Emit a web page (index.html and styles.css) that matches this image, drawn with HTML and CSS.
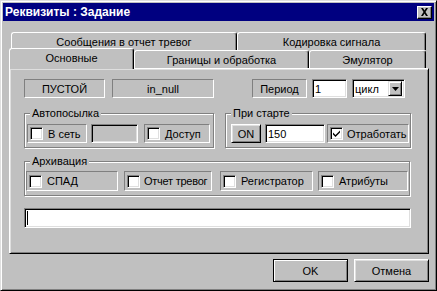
FILE: index.html
```html
<!DOCTYPE html>
<html lang="ru">
<head>
    <meta charset="UTF-8">
    <title>Реквизиты : Задание</title>
    <link rel="stylesheet" href="styles.css">
</head>
<body>
    <div class="window">
        <div class="titlebar">
            <span class="title">Реквизиты : Задание</span>
            <span class="close">
                <svg width="9" height="8" viewBox="0 0 9 8"><path d="M1 0h2l1.5 2.5L6 0h2L5.5 4 8 8H6L4.5 5.5 3 8H1l2.5-4z" fill="#000"/></svg>
            </span>
        </div>
        <div class="content">
            <div class="tab-row back">
                <div class="tab w-alarm">Сообщения в отчет тревог</div>
                <div class="tab w-code">Кодировка сигнала</div>
            </div>
            <div class="tab-row front">
                <div class="tab active w-main">Основные</div>
                <div class="tab w-limits">Границы и обработка</div>
                <div class="tab w-emul">Эмулятор</div>
            </div>
            <div class="panel">
                <div class="row top-row">
                    <div class="static w-type">ПУСТОЙ</div>
                    <div class="static w-name">in_null</div>
                    <div class="static w-period">Период</div>
                    <div class="edit w-num">1</div>
                    <div class="edit combo">
                        <span class="combo-text">цикл</span>
                        <span class="combo-btn">
                            <svg width="7" height="4" viewBox="0 0 7 4"><path d="M0 0h7L3.5 4z" fill="#000"/></svg>
                        </span>
                    </div>
                </div>

                <div class="row groups-row">
                    <div class="group g-auto">
                        <span class="group-label">Автопосылка</span>
                        <div class="group-row pad-auto">
                            <div class="check w-net"><span class="box"></span>В сеть</div>
                            <div class="edit disabled w-blank"></div>
                            <div class="check w-access"><span class="box"></span>Доступ</div>
                        </div>
                    </div>
                    <div class="group g-start">
                        <span class="group-label">При старте</span>
                        <div class="group-row pad-start">
                            <div class="button w-on">ON</div>
                            <div class="edit w-delay">150</div>
                            <div class="check w-run">
                                <span class="box">
                                    <svg width="7" height="7" viewBox="0 0 7 7"><path d="M0 2.5l2.5 2.5L7 0.5v2L2.5 7 0 4.5z" fill="#000"/></svg>
                                </span>Отработать
                            </div>
                        </div>
                    </div>
                </div>

                <div class="group g-archive">
                    <span class="group-label">Архивация</span>
                    <div class="group-row pad-archive">
                        <div class="check tall w-spad"><span class="box"></span>СПАД</div>
                        <div class="check tall w-report"><span class="box"></span>Отчет тревог</div>
                        <div class="check tall w-reg"><span class="box"></span>Регистратор</div>
                        <div class="check tall w-attr"><span class="box"></span>Атрибуты</div>
                    </div>
                </div>

                <div class="edit text-line"><span class="caret"></span></div>
            </div>
            <div class="buttons">
                <div class="button default">OK</div>
                <div class="button">Отмена</div>
            </div>
        </div>
    </div>
</body>
</html>
```

FILE: styles.css
```css
body {
    margin: 0;
    background: #c0c0c0;
    font-family: "Liberation Sans", Arial, sans-serif;
    font-size: 11px;
    color: #000;
}
.window {
    width: 437px;
    height: 291px;
    box-sizing: border-box;
    border: 1px solid;
    border-color: #dfdfdf #000 #000 #dfdfdf;
    box-shadow: inset 1px 1px #fff, inset -1px -1px #808080;
    padding: 2px;
    display: flex;
    flex-direction: column;
}
.titlebar {
    height: 18px;
    background: #000080;
    color: #fff;
    display: flex;
    align-items: center;
    justify-content: space-between;
    padding: 0 2px;
}
.title {
    font-weight: bold;
    font-size: 12px;
}
.close {
    width: 15px;
    height: 13px;
    box-sizing: border-box;
    background: #c0c0c0;
    border: 1px solid;
    border-color: #fff #000 #000 #fff;
    box-shadow: inset -1px -1px #808080;
    display: flex;
    align-items: center;
    justify-content: center;
}
.content {
    padding: 11px 0 0 6px;
}

/* tabs */
.tab-row {
    display: flex;
    height: 18px;
    align-items: flex-start;
}
.tab-row.back {
    padding-left: 2px;
}
.tab {
    box-sizing: border-box;
    height: 18px;
    border: 1px solid;
    border-bottom: 0;
    border-color: #fff #000 #000 #fff;
    border-radius: 3px 3px 0 0;
    box-shadow: inset -1px 0 #808080;
    display: flex;
    align-items: center;
    justify-content: center;
    background: #c0c0c0;
    white-space: nowrap;
}
.tab.active {
    height: 21px;
    margin-top: -2px;
    padding-bottom: 3px;
    position: relative;
    z-index: 1;
}
.w-alarm { width: 226px; }
.w-code { width: 189px; }
.w-main { width: 125px; }
.w-limits { width: 175px; }
.w-emul { width: 117px; }

.panel {
    width: 420px;
    height: 186px;
    box-sizing: border-box;
    border: 1px solid;
    border-color: #fff #000 #000 #fff;
    box-shadow: inset 1px 1px #dfdfdf, inset -1px -1px #808080;
    padding: 10px 0 0 14px;
}
.row {
    display: flex;
}

/* controls */
.static, .edit, .check, .button {
    box-sizing: border-box;
    height: 19px;
    display: flex;
    align-items: center;
    white-space: nowrap;
    flex: none;
}
.static {
    border: 1px solid;
    border-color: #808080 #fff #fff #808080;
    justify-content: center;
}
.edit {
    background: #fff;
    border: 1px solid;
    border-color: #808080 #fff #fff #808080;
    box-shadow: inset 1px 1px #000, inset -1px -1px #dfdfdf;
    padding-left: 2px;
}
.edit.disabled {
    background: #c0c0c0;
}
.check {
    border: 1px solid;
    border-color: #808080 #fff #fff #808080;
    padding-left: 2px;
    gap: 5px;
    overflow: hidden;
}
.check.tall {
    height: 20px;
}
.box {
    box-sizing: border-box;
    width: 13px;
    height: 13px;
    flex: none;
    background: #fff;
    border: 1px solid;
    border-color: #808080 #fff #fff #808080;
    box-shadow: inset 1px 1px #000, inset -1px -1px #dfdfdf;
    display: flex;
    align-items: center;
    justify-content: center;
}
.button {
    justify-content: center;
    border: 1px solid;
    border-color: #fff #000 #000 #fff;
    box-shadow: inset 1px 1px #dfdfdf, inset -1px -1px #808080;
}

.w-type { width: 81px; }
.w-name { width: 102px; margin-left: 7px; }
.w-period { width: 55px; margin-left: 38px; }
.w-num { width: 35px; margin-left: 5px; }
.combo {
    width: 53px;
    margin-left: 5px;
    padding: 0 0 0 2px;
    justify-content: space-between;
}
.combo-btn {
    box-sizing: border-box;
    width: 14px;
    height: 15px;
    margin-right: 2px;
    background: #c0c0c0;
    border: 1px solid;
    border-color: #dfdfdf #000 #000 #dfdfdf;
    box-shadow: inset 1px 1px #fff, inset -1px -1px #808080;
    display: flex;
    align-items: center;
    justify-content: center;
}

/* group boxes */
.group {
    box-sizing: border-box;
    border: 1px solid #808080;
    box-shadow: 1px 1px 0 #fff, inset 1px 1px 0 #fff;
    display: flex;
    flex-direction: column;
    padding-bottom: 4px;
}
.group-label {
    align-self: flex-start;
    margin: -7px 0 0 5px;
    padding: 0 2px;
    line-height: 12px;
    background: #c0c0c0;
}
.group-row {
    display: flex;
    margin-top: 5px;
}
.groups-row {
    margin-top: 15px;
}
.g-auto { width: 190px; }
.g-start { width: 186px; margin-left: 11px; }
.g-archive { width: 386px; margin-top: 13px; }
.g-archive .group-row { margin-top: 4px; }

.pad-auto { padding-left: 2px; }
.pad-start { padding-left: 5px; }
.pad-archive { padding-left: 1px; }

.w-net { width: 60px; }
.w-blank { width: 47px; margin-left: 4px; }
.w-access { width: 66px; margin-left: 6px; }
.w-on { width: 30px; }
.w-delay { width: 60px; margin-left: 4px; }
.w-run { width: 82px; margin-left: 2px; gap: 4px; }

.w-spad { width: 92px; }
.w-report { width: 88px; margin-left: 6px; gap: 4px; letter-spacing: -0.25px; }
.w-reg { width: 93px; margin-left: 8px; }
.w-attr { width: 90px; margin-left: 5px; }

.text-line {
    width: 387px;
    height: 20px;
    margin-top: 12px;
}
.caret {
    width: 1px;
    height: 14px;
    background: #000;
}

.buttons {
    width: 420px;
    display: flex;
    justify-content: flex-end;
    gap: 6px;
    margin-top: 5px;
}
.buttons .button {
    width: 75px;
    height: 23px;
}
.button.default {
    border-color: #000;
    box-shadow: inset 1px 1px #fff, inset -1px -1px #808080;
}
```
